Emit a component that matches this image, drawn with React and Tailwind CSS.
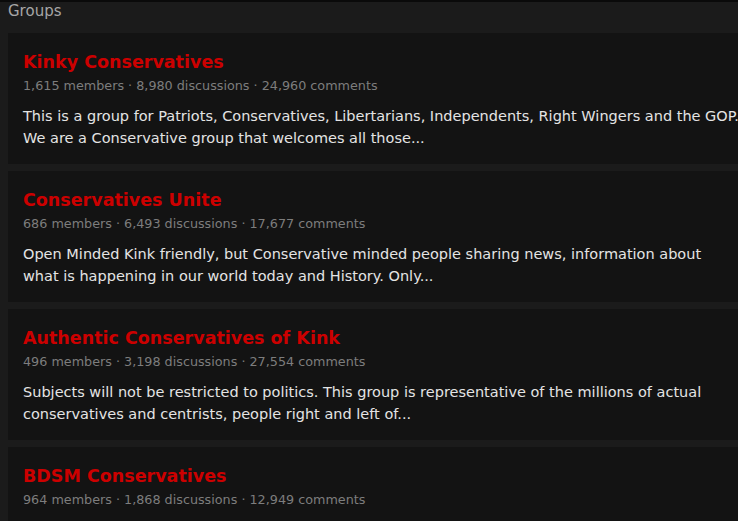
const groups = [
  {
    name: "Kinky Conservatives",
    meta: "1,615 members · 8,980 discussions · 24,960 comments",
    desc: ["This is a group for Patriots, Conservatives, Libertarians, Independents, Right Wingers and the GOP.", "We are a Conservative group that welcomes all those..."],
  },
  {
    name: "Conservatives Unite",
    meta: "686 members · 6,493 discussions · 17,677 comments",
    desc: ["Open Minded Kink friendly, but Conservative minded people sharing news, information about", "what is happening in our world today and History. Only..."],
  },
  {
    name: "Authentic Conservatives of Kink",
    meta: "496 members · 3,198 discussions · 27,554 comments",
    desc: ["Subjects will not be restricted to politics. This group is representative of the millions of actual", "conservatives and centrists, people right and left of..."],
  },
  {
    name: "BDSM Conservatives",
    meta: "964 members · 1,868 discussions · 12,949 comments",
    desc: null,
  },
];

export default function App() {
  return (
    <div
      className="w-[738px] h-[521px] overflow-hidden bg-[#1b1b1b] border-t-2 border-[#0a0a0a]"
      style={{ fontFamily: '"DejaVu Sans", Verdana, sans-serif' }}
    >
      <div className="h-[31px] pl-2 text-[15px] leading-[18px] text-[#a6a6a6]">Groups</div>
      <div className="pl-2 flex flex-col gap-[7px] w-[800px]">
        {groups.map((g) => (
          <div key={g.name} className="bg-[#131313] h-[131px] pl-[15px] pt-[17px] whitespace-nowrap">
            <div className="text-[17.5px] leading-[24px] font-bold text-[#cc0000]">{g.name}</div>
            <div className="text-[12.75px] leading-[18px] text-[#7d7d7d] mt-[3px]">{g.meta}</div>
            {g.desc && (
              <div className="text-[14.5px] leading-[22px] text-[#e4e4e4] mt-[10px]">
                <div>{g.desc[0]}</div>
                <div>{g.desc[1]}</div>
              </div>
            )}
          </div>
        ))}
      </div>
    </div>
  );
}
